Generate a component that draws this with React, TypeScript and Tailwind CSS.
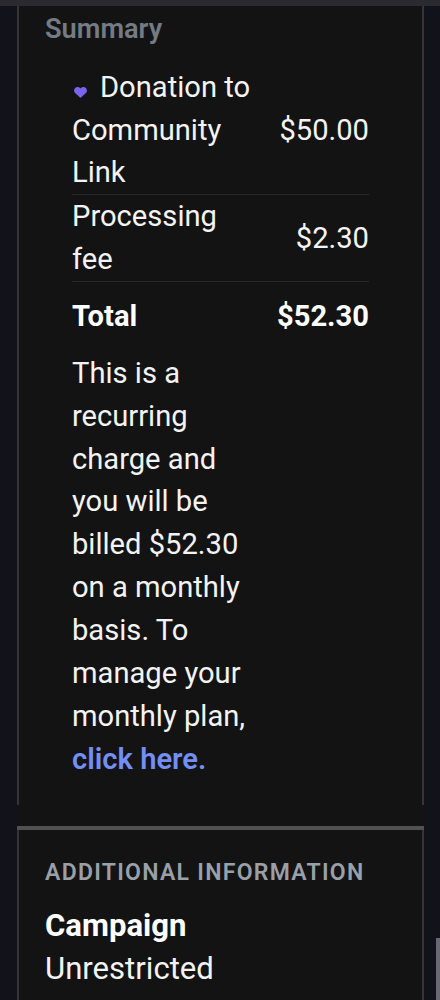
import React from "react";

const items = [
  { label: "Donation to Community Link", amount: "$50.00", heart: true },
  { label: "Processing fee", amount: "$2.30", heart: false },
];

const HeartIcon: React.FC = () => (
  <svg
    viewBox="0 0 24 22"
    preserveAspectRatio="none"
    className="inline-block w-[13px] h-[11px] mr-[13px] ml-[2px] align-[-1px]"
    fill="#7a64ea"
  >
    <path d="M12 22 2.500 12.600C-.8 9.300-.6 4.500 2.200 1.900 5-.8 9.500-.4 12 3.200c2.500-3.600 7-4 9.800-1.300 2.800 2.600 3 7.400-.3 10.700Z" />
  </svg>
);

const Summary: React.FC = () => {
  return (
    <section className="h-[799px] border-x-2 border-[#353535] pl-[26px] pr-[53px] pt-[2px]">
      <h2 className="text-[27.200px] leading-[43px] font-semibold text-[#747b84]">Summary</h2>

      <div className="ml-[27px] mt-[14.700px]">
        {items.map((item) => (
          <div key={item.label} className="flex items-center justify-between border-b border-[#292929]">
            <p className="w-[181px]">
              {item.heart && <HeartIcon />}
              {item.label}
            </p>
            <span>{item.amount}</span>
          </div>
        ))}

        <div className="flex h-[70px] items-center justify-between font-bold text-white">
          <span>Total</span>
          <span>$52.30</span>
        </div>

        <p className="w-[181px]">
          This is a recurring charge and you will be billed $52.30 on a monthly basis. To manage your monthly plan,{" "}
          <a href="#" className="font-semibold text-[#738ef5]">
            click here.
          </a>
        </p>
      </div>
    </section>
  );
};

const AdditionalInformation: React.FC = () => {
  return (
    <section className="mt-[21px] flex-1 border-x-2 border-[#353535]">
      <div className="-mx-[2px] h-[4px] bg-[#515151]" />
      <div className="pl-[26px] pt-[26px]">
        <h2 className="text-[23px] leading-[34px] font-semibold tracking-[1.280px] text-[#99a0a9]">
          ADDITIONAL INFORMATION
        </h2>
        <div className="mt-[15px] text-[31.100px]">
          <h3 className="font-bold text-white">Campaign</h3>
          <p>Unrestricted</p>
        </div>
      </div>
    </section>
  );
};

const App: React.FC = () => {
  return (
    <div className="relative flex h-[1000px] w-[440px] flex-col overflow-hidden bg-[#12131a] font-['Roboto',sans-serif] text-[29.150px] leading-[42.850px] text-[#f3f3f3]">
      <div className="h-[6px] shrink-0 bg-[#2a2a30]" />
      <main className="ml-[17px] flex w-[407px] flex-1 flex-col bg-[#131313]">
        <Summary />
        <AdditionalInformation />
      </main>

      {/* Scrollbar thumb */}
      <div className="absolute right-0 top-[938px] h-[62px] w-[4px] bg-[#686872]" />
    </div>
  );
};

export default App;
